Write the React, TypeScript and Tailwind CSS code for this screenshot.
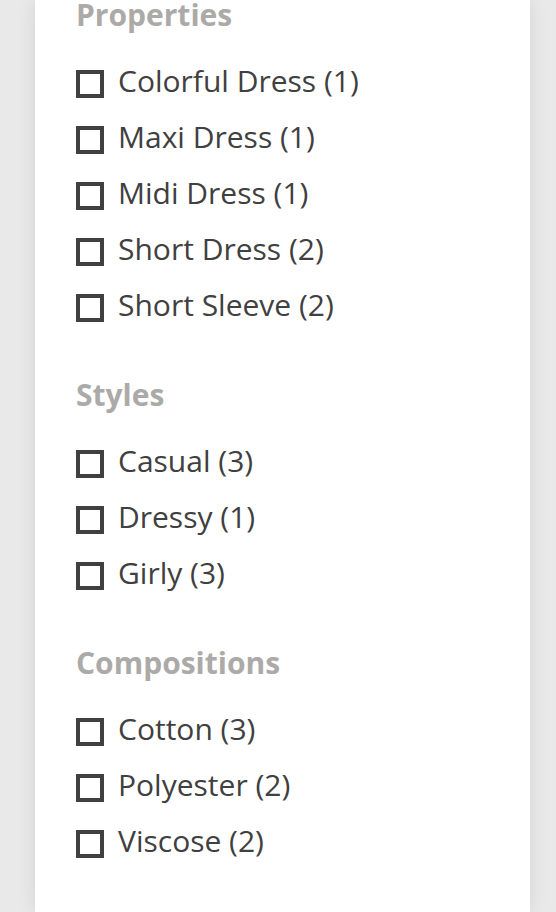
import React from "react";

const groups = [
  {
    title: "Properties",
    items: ["Colorful Dress (1)", "Maxi Dress (1)", "Midi Dress (1)", "Short Dress (2)", "Short Sleeve (2)"],
  },
  {
    title: "Styles",
    items: ["Casual (3)", "Dressy (1)", "Girly (3)"],
  },
  {
    title: "Compositions",
    items: ["Cotton (3)", "Polyester (2)", "Viscose (2)"],
  },
];

export default function App() {
  return (
    <div
      className="h-[912px] overflow-hidden bg-[#e9e9e9] pl-[35px] pr-[26px]"
      style={{ fontFamily: '"Open Sans", sans-serif' }}
    >
      <div className="h-full flex flex-col bg-white shadow-[0_0_18px_rgba(0,0,0,0.09)] pl-[41px]">
        <div className="-mt-[5px] flex flex-col gap-[42px]">
          {groups.map((group) => (
            <div key={group.title}>
              <h3 className="text-[30px] leading-[40px] font-bold text-[#abaaa8]">{group.title}</h3>
              <ul className="mt-[18px]">
                {group.items.map((item) => (
                  <li key={item} className="flex items-center h-[56px]">
                    <span className="w-[28px] h-[28px] border-[4px] border-[#404040] bg-white mt-[5px] shrink-0" />
                    <span className="ml-[14px] text-[30px] leading-[40px] text-[#404040]">{item}</span>
                  </li>
                ))}
              </ul>
            </div>
          ))}
        </div>
      </div>
    </div>
  );
}
